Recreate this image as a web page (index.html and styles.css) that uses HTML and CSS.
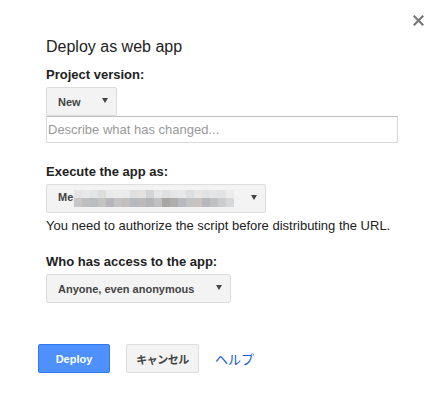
FILE: index.html
```html
<!DOCTYPE html>
<html lang="en">
<head>
    <meta charset="UTF-8">
    <meta name="viewport" content="width=device-width, initial-scale=1.0">
    <title>Deploy as web app</title>
    <link rel="stylesheet" href="styles.css">
</head>
<body>
    <div class="dialog">
        <button class="close" aria-label="Close">
            <svg width="11" height="11" viewBox="0 0 11 11">
                <path d="M1.5 1.5 L9.5 9.5 M9.5 1.5 L1.5 9.5" stroke="#777" stroke-width="2.2" stroke-linecap="square"/>
            </svg>
        </button>

        <h1 class="title">Deploy as web app</h1>

        <div class="label">Project version:</div>
        <div class="select select-version">
            <span>New</span>
            <span class="arrow"></span>
        </div>
        <input class="describe" type="text" placeholder="Describe what has changed...">

        <div class="label label-gap">Execute the app as:</div>
        <div class="select select-user">
            <span>Me<span class="blur"></span></span>
            <span class="arrow"></span>
        </div>
        <p class="note">You need to authorize the script before distributing the URL.</p>

        <div class="label label-gap2">Who has access to the app:</div>
        <div class="select select-access">
            <span>Anyone, even anonymous</span>
            <span class="arrow"></span>
        </div>

        <div class="actions">
            <button class="btn btn-primary">Deploy</button>
            <button class="btn btn-cancel">キャンセル</button>
            <a class="help" href="#">ヘルプ</a>
        </div>
    </div>
</body>
</html>
```

FILE: styles.css
```css
body {
    margin: 0;
    background-color: #fff;
    font-family: "Liberation Sans", Arial, "Noto Sans CJK JP", sans-serif;
    color: #222;
}
.dialog {
    position: relative;
    padding: 37px 0 0 46px;
}
.close {
    position: absolute;
    top: 15px;
    left: 413px;
    padding: 0;
    border: none;
    background: none;
    line-height: 0;
    cursor: pointer;
}
.title {
    margin: 0;
    font-size: 16px;
    font-weight: normal;
    line-height: 20px;
    color: #222;
}
.label {
    margin-top: 10px;
    font-size: 13px;
    font-weight: bold;
    line-height: 16px;
}
.label-gap {
    margin-top: 21px;
}
.label-gap2 {
    margin-top: 20px;
}
.select {
    display: flex;
    justify-content: space-between;
    align-items: center;
    box-sizing: border-box;
    height: 29px;
    margin-top: 4px;
    padding: 0 8px 0 11px;
    border: 1px solid #dcdcdc;
    border-radius: 2px;
    background-color: #f3f3f3;
    font-size: 11px;
    font-weight: bold;
    color: #444;
}
.select-version {
    width: 71px;
}
.select-user {
    width: 220px;
}
.select-access {
    width: 185px;
}
.arrow {
    width: 0;
    height: 0;
    margin-top: -2px;
    border-left: 3px solid transparent;
    border-right: 3px solid transparent;
    border-top: 5px solid #444;
}
.blur {
    display: inline-block;
    width: 160px;
    height: 17px;
    margin-left: 1px;
    vertical-align: middle;
    background-repeat: no-repeat;
    background-size: 160px 8px, 160px 9px;
    background-position: 0 0, 0 8px;
    background-image:
        linear-gradient(to right,
            #e4e4e4 0 8px, #e8e8ea 8px 16px, #e2e4e6 16px 24px, #dddddd 24px 32px,
            #e8e9ea 32px 40px, #ebebeb 40px 48px, #e9eaec 48px 56px, #e1dfdd 56px 64px,
            #e4e2e0 64px 72px, #d2d3d5 72px 80px, #e5e6e8 80px 88px, #e0e1e3 88px 96px,
            #e6e6e6 96px 104px, #e8e8e8 104px 112px, #dddedf 112px 120px, #e8e6e4 120px 128px,
            #e2e2e2 128px 136px, #e4e5e6 136px 144px, #e2e3e5 144px 152px, #ececec 152px 160px),
        linear-gradient(to right,
            #c8c6c8 0 8px, #bfbfc2 8px 16px, #b9bcc0 16px 24px, #c2c5c2 24px 32px,
            #b8b6bc 32px 40px, #c4c4c4 40px 48px, #c2bfbd 48px 56px, #b5babe 56px 64px,
            #bdbbb9 64px 72px, #b3b5b6 72px 80px, #c0c0c2 80px 88px, #a8a6a4 88px 96px,
            #aeadab 96px 104px, #b8b9bd 104px 112px, #c3c5c3 112px 120px, #c6c3c0 120px 128px,
            #b6b8bc 128px 136px, #c1c1c3 136px 144px, #cbccce 144px 152px, #d6d7d8 152px 160px);
}
.describe {
    display: block;
    box-sizing: border-box;
    width: 352px;
    height: 27px;
    margin: 0;
    padding: 0 1px;
    border: 1px solid #d9d9d9;
    border-top-color: #c0c0c0;
    font-family: inherit;
    font-size: 13px;
    color: #222;
}
.describe::placeholder {
    color: #999;
}
.note {
    margin: 5px 0 0;
    font-size: 13px;
    line-height: 16px;
}
.actions {
    display: flex;
    align-items: center;
    gap: 16px;
    margin: 41px 0 0 -8px;
}
.btn {
    box-sizing: border-box;
    width: 72px;
    height: 29px;
    padding: 0;
    border: 1px solid #dcdcdc;
    border-radius: 2px;
    background-color: #f3f3f3;
    font-family: inherit;
    font-size: 11px;
    font-weight: bold;
    color: #444;
    cursor: pointer;
}
.btn-primary {
    border-color: #3079ed;
    background-color: #4d90fe;
    color: #fff;
}
.btn-cancel {
    width: 73px;
    letter-spacing: -0.5px;
}
.help {
    font-size: 13px;
    color: #15c;
    text-decoration: none;
}
```
